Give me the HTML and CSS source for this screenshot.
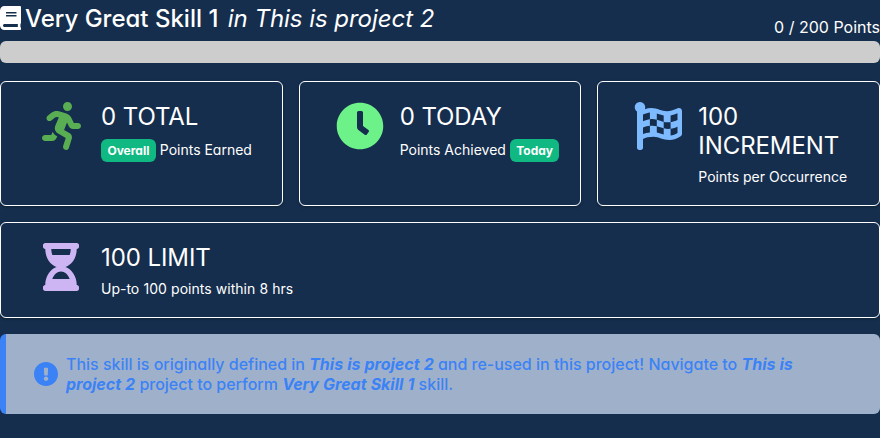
FILE: index.html
```html
<!DOCTYPE html>
<html lang="en">
<head>
<meta charset="utf-8">
<title>Very Great Skill 1</title>
<link rel="stylesheet" href="styles.css">
</head>
<body>
<main class="skill">
  <header class="skill-header">
    <h1 class="skill-title">
      <svg class="book-icon" viewBox="0 0 448 512"><path d="M448 360V24c0-13.3-10.7-24-24-24H96C43 0 0 43 0 96v320c0 53 43 96 96 96h328c13.3 0 24-10.7 24-24v-16c0-7.5-3.5-14.3-8.9-18.7-4.2-15.4-4.2-59.3 0-74.7 5.4-4.3 8.9-11.1 8.9-18.6zM128 134c0-3.3 2.7-6 6-6h212c3.3 0 6 2.7 6 6v20c0 3.3-2.7 6-6 6H134c-3.3 0-6-2.7-6-6v-20zm0 64c0-3.3 2.7-6 6-6h212c3.3 0 6 2.7 6 6v20c0 3.3-2.7 6-6 6H134c-3.3 0-6-2.7-6-6v-20zm253.4 250H96c-17.7 0-32-14.3-32-32 0-17.6 14.4-32 32-32h285.4c-1.9 17.1-1.9 46.9 0 64z"/></svg>
      <span>Very Great Skill 1 <em>in This is project 2</em></span>
    </h1>
    <div class="points">0 / 200 Points</div>
  </header>
  <div class="progress"></div>
  <section class="cards">
    <article class="card">
      <div class="card-icon running"><svg viewBox="0 0 416 512" width="39" height="48"><path d="M272 96c26.51 0 48-21.49 48-48S298.51 0 272 0s-48 21.49-48 48 21.49 48 48 48zM113.69 317.47l-14.8 34.52H32c-17.67 0-32 14.33-32 32s14.33 32 32 32h77.45c19.25 0 36.58-11.44 44.11-29.09l8.79-20.52-10.67-6.3c-17.32-10.23-30.06-25.37-37.99-42.61zM384 223.99h-44.03l-26.06-53.25c-12.5-25.55-35.45-44.23-61.78-50.94l-71.08-21.14c-28.3-6.8-57.77-.55-80.84 17.14l-39.67 30.41c-14.03 10.75-16.69 30.83-5.92 44.86s30.84 16.66 44.86 5.92l39.69-30.41c7.67-5.89 17.44-8 25.27-6.14l14.7 4.37-37.46 87.39c-12.62 29.48-1.31 64.01 26.3 80.31l84.98 50.17-27.47 87.73c-5.28 16.86 4.11 34.82 20.97 40.09 3.19 1 6.41 1.48 9.58 1.48 13.61 0 26.23-8.77 30.52-22.45l31.64-101.06c5.91-20.77-2.89-43.08-21.64-54.39l-61.24-36.14 31.31-78.28 20.27 41.43c8 16.34 24.92 26.89 43.11 26.89H384c17.67 0 32-14.33 32-32s-14.33-31.99-32-31.99z"/></svg></div>
      <div class="card-body">
        <div class="card-value">0 TOTAL</div>
        <div class="card-label tagged"><span class="tag">Overall</span> Points Earned</div>
      </div>
    </article>
    <article class="card">
      <div class="card-icon clock"><svg viewBox="0 0 512 512" width="48" height="48"><path d="M256,8C119,8,8,119,8,256S119,504,256,504,504,393,504,256,393,8,256,8Zm92.49,313h0l-20,25a16,16,0,0,1-22.49,2.5h0l-67-49.72a40,40,0,0,1-15-31.23V112a16,16,0,0,1,16-16h32a16,16,0,0,1,16,16V256l58,42.5A16,16,0,0,1,348.49,321Z"/></svg></div>
      <div class="card-body">
        <div class="card-value">0 TODAY</div>
        <div class="card-label tagged">Points Achieved <span class="tag">Today</span></div>
      </div>
    </article>
    <article class="card">
      <div class="card-icon flag"><svg viewBox="0 0 512 512" width="48" height="48"><path d="M243.2 189.9V258c26.1 5.9 49.3 15.6 73.6 22.3v-68.2c-26-5.8-49.4-15.5-73.6-22.2zm223.3-123c-34.3 15.9-76.5 31.9-117 31.9C296 98.8 251.7 64 184.3 64c-25 0-47.3 4.4-68 12 2.8-7.3 4.1-15.2 3.6-23.6C118.1 24 94.8 1.2 66.3 0 34.3-1.3 8 24.3 8 56c0 19 9.5 35.8 24 45.9V488c0 13.3 10.7 24 24 24h16c13.3 0 24-10.7 24-24v-94.4c28.3-12.1 63.6-22.1 114.4-22.1 53.6 0 97.8 34.8 165.2 34.8 48.2 0 86.7-16.3 122.5-40.9 8.7-6 13.8-15.8 13.8-26.4V95.9c.1-23.3-24.2-38.8-45.4-29zM169.6 325.5c-25.8 2.7-50 8.2-73.6 16.6v-70.5c26.2-9.3 47.5-15 73.6-17.4v71.3zM464 191c-23.6 9.8-46.3 19.5-73.6 23.9V286c24.8-3.4 51.4-11.8 73.6-26v70.5c-25.1 16.1-48.5 24.7-73.6 27.1V286c-27 3.7-47.9 1.5-73.6-5.6v67.4c-23.9-7.4-47.3-16.7-73.6-21.3V258c-19.7-4.4-40.8-6.8-73.6-3.8v-70c-22.4 3.1-44.6 10.2-73.6 20.9v-70.5c33.2-12.2 50.1-19.8 73.6-22v71.6c27-3.7 48.4-1.3 73.6 5.7v-67.4c23.7 7.4 47.2 16.7 73.6 21.3v68.4c23.7 5.3 47.6 6.9 73.6 2.7V143c27-4.8 52.3-13.6 73.6-22.5z"/></svg></div>
      <div class="card-body">
        <div class="card-value">100 INCREMENT</div>
        <div class="card-label">Points per Occurrence</div>
      </div>
    </article>
    <article class="card wide">
      <div class="card-icon hourglass"><svg viewBox="0 0 384 512" width="36" height="48"><path d="M360 0H24C10.745 0 0 10.745 0 24v16c0 13.255 10.745 24 24 24 0 90.965 51.016 167.734 120.842 192C75.016 280.266 24 357.035 24 448c-13.255 0-24 10.745-24 24v16c0 13.255 10.745 24 24 24h336c13.255 0 24-10.745 24-24v-16c0-13.255-10.745-24-24-24 0-90.965-51.016-167.734-120.842-192C308.984 231.734 360 154.965 360 64c13.255 0 24-10.745 24-24V24c0-13.255-10.745-24-24-24zm-75.078 384H99.08c17.059-46.797 52.096-80 92.92-80 40.821 0 75.862 33.196 92.922 80zm.019-256H99.078C91.988 108.548 88 86.748 88 64h208c0 22.805-3.987 44.587-11.059 64z"/></svg></div>
      <div class="card-body">
        <div class="card-value">100 LIMIT</div>
        <div class="card-label spaced">Up-to 100 points within 8 hrs</div>
      </div>
    </article>
  </section>
  <aside class="notice">
    <svg class="notice-icon" viewBox="8 8 496 496"><path d="M504 256c0 136.997-111.043 248-248 248S8 392.997 8 256C8 119.083 119.043 8 256 8s248 111.083 248 248zm-248 50c-25.405 0-46 20.595-46 46s20.595 46 46 46 46-20.595 46-46-20.595-46-46-46zm-43.673-165.346l7.418 136c.347 6.364 5.609 11.346 11.982 11.346h48.546c6.373 0 11.635-4.982 11.982-11.346l7.418-136c.375-6.874-5.098-12.654-11.982-12.654h-63.383c-6.884 0-12.356 5.78-11.981 12.654z"/></svg>
    <p>This skill is originally defined in <b>This is project 2</b> and re-used in this project! Navigate to <b>This is project 2</b> project to perform <b>Very Great Skill 1</b> skill.</p>
  </aside>
</main>
</body>
</html>
```
FILE: styles.css
```css
* {
  box-sizing: border-box;
}

body {
  margin: 0;
  min-height: 438px;
  background: #152e4d;
  color: #fff;
  font: 16px/24px Inter, sans-serif;
  font-feature-settings: "cv02", "cv03", "cv04", "cv11";
}

svg {
  display: block;
  fill: currentColor;
}

.skill-header {
  display: flex;
  justify-content: space-between;
  height: 41px;
}

.skill-title {
  display: flex;
  gap: 4px;
  margin: 0;
  padding-top: 4px;
  font-size: 24px;
  font-weight: 500;
  line-height: 29px;
}

.skill-title em {
  margin-left: 3px;
  font-weight: 400;
  letter-spacing: -.04px;
}

.book-icon {
  width: 21px;
  height: 24px;
  margin-top: 2px;
}

.points {
  padding-top: 15px;
}

.progress {
  height: 22px;
  border-radius: 6px;
  background: #cdcdcd;
}

.cards {
  display: grid;
  grid-template-columns: repeat(3, minmax(0, 1fr));
  gap: 16px;
  margin-top: 18px;
}

.card {
  display: flex;
  gap: 15px;
  min-height: 96px;
  padding: 20px 24px 20px 35px;
  border: 1px solid #fff;
  border-radius: 6px;
  box-shadow: 0 1px 3px rgba(0, 0, 0, .3);
}

.card.wide {
  grid-column: 1 / -1;
}

.card-icon {
  display: flex;
  flex: 0 0 50px;
  justify-content: center;
  align-items: flex-start;
}

.running { color: #59ad52; }
.clock { color: #6df28a; }
.flag { color: #7ebaff; }
.hourglass { color: #cdb5f3; }

.card-value {
  font-size: 24px;
  letter-spacing: -.08px;
  line-height: 29px;
}

.card-body {
  min-width: 0;
}

.card-label {
  margin-top: 8px;
  font-size: 14px;
  line-height: 17px;
  white-space: nowrap;
}

.card-label.tagged {
  margin-top: 7px;
  line-height: 24px;
}

.card-label.spaced {
  word-spacing: .3px;
}

.tag {
  display: inline-block;
  padding: 0 6.4px;
  border-radius: 6px;
  background: #10b981;
  font-size: 12px;
  font-weight: 700;
  line-height: 23px;
}

.notice {
  display: flex;
  align-items: center;
  gap: 8px;
  height: 80px;
  margin-top: 16px;
  padding: 0 60px 0 28px;
  border-left: 6px solid #3b82f6;
  border-radius: 6px;
  background: #9fb1ca;
  color: #3b82f6;
  font-weight: 500;
  line-height: 20px;
}

.notice-icon {
  flex: none;
  width: 24px;
  height: 24px;
}

.notice p {
  margin: 0;
  letter-spacing: -.01px;
}

.notice b {
  font-style: italic;
  font-weight: 700;
  word-spacing: .3px;
}
```
